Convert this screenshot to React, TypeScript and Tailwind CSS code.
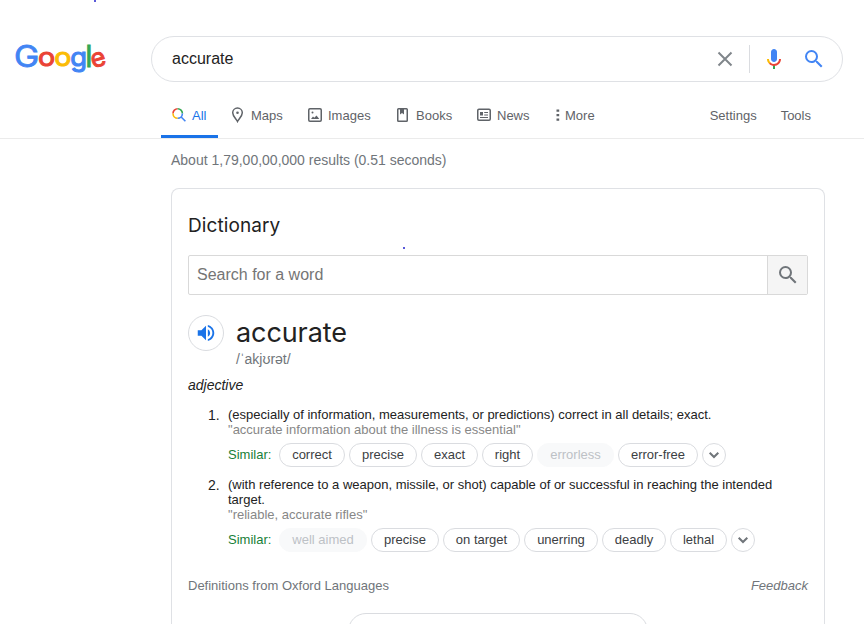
import clsx from "clsx";
import { MdSearch, MdVolumeUp } from "react-icons/md";

type Pill = {
  label: string;
  width: string;
  muted?: boolean;
};

type Definition = {
  lines: string[];
  example: string;
  similar: Pill[];
};

const definitions: Definition[] = [
  {
    lines: [
      "(especially of information, measurements, or predictions) correct in all details; exact.",
    ],
    example: "accurate information about the illness is essential",
    similar: [
      { label: "correct", width: "w-[66px]" },
      { label: "precise", width: "w-[68px]" },
      { label: "exact", width: "w-[57px]" },
      { label: "right", width: "w-[51px]" },
      { label: "errorless", width: "w-[77px]", muted: true },
      { label: "error-free", width: "w-[80px]" },
    ],
  },
  {
    lines: [
      "(with reference to a weapon, missile, or shot) capable of or successful in reaching the intended",
      "target.",
    ],
    example: "reliable, accurate rifles",
    similar: [
      { label: "well aimed", width: "w-[88px]", muted: true },
      { label: "precise", width: "w-[68px]" },
      { label: "on target", width: "w-[77px]" },
      { label: "unerring", width: "w-[74px]" },
      { label: "deadly", width: "w-[64px]" },
      { label: "lethal", width: "w-[57px]" },
    ],
  },
];

function Logo() {
  return (
    <svg
      width="106"
      height="46"
      viewBox="-6 -6 106 46"
      role="img"
      aria-label="Google"
      className="-ml-1.5 -mt-1.5 block font-[Inter,sans-serif]"
    >
      <text x="-1" y="25.500" fontSize="30" textLength="25.200" lengthAdjust="spacingAndGlyphs" fill="#4285f4" stroke="#4285f4" strokeWidth="0.8">G</text>
      <text x="23" y="25.300" fontSize="25.500" textLength="17.200" lengthAdjust="spacingAndGlyphs" fill="#ea4335" stroke="#ea4335" strokeWidth="1">o</text>
      <text x="39.200" y="25.300" fontSize="25.500" textLength="17.200" lengthAdjust="spacingAndGlyphs" fill="#fbbc05" stroke="#fbbc05" strokeWidth="1">o</text>
      <text x="55.200" y="25.300" fontSize="25.500" textLength="16.800" lengthAdjust="spacingAndGlyphs" fill="#4285f4" stroke="#4285f4" strokeWidth="1">g</text>
      <text x="70.300" y="25.600" fontSize="30" fill="#34a853" stroke="#34a853" strokeWidth="0.8">l</text>
      <text x="75.700" y="25.300" fontSize="25.500" fill="#ea4335" stroke="#ea4335" strokeWidth="1" transform="rotate(-16 84 18.500)">e</text>
    </svg>
  );
}

function MicIcon() {
  return (
    <svg viewBox="0 0 24 24" className="h-6 w-6">
      <path fill="#4285f4" d="m12 15c1.66 0 3-1.31 3-2.97v-7.02c0-1.66-1.34-3.01-3-3.01s-3 1.34-3 3.01v7.02c0 1.66 1.34 2.97 3 2.97z" />
      <path fill="#34a853" d="m11 18.08h2v3.92h-2z" />
      <path fill="#fbbc05" d="m7.05 16.87c-1.27-1.33-2.05-2.83-2.05-4.87h2c0 1.45 0.56 2.42 1.47 3.38v0.32l-1.15 1.18z" />
      <path fill="#ea4335" d="m12 16.93a4.97 5.25 0 0 1 -3.54 -1.55l-1.41 1.49c1.26 1.34 3.02 2.13 4.95 2.13 3.87 0 6.99-2.92 6.99-7h-1.99c0 2.92-2.24 4.93-5 4.93z" />
    </svg>
  );
}

function AllIcon() {
  return (
    <svg viewBox="0 0 16 16" className="h-4 w-4" fill="none" strokeWidth="1.6">
      <path stroke="#ea4335" d="M2 6.500a4.700 4.700 0 0 1 4.700-4.700" />
      <path stroke="#34a853" d="M6.700 1.800a4.700 4.700 0 0 1 4.700 4.700" />
      <path stroke="#fbbc05" d="M6.700 11.200a4.700 4.700 0 0 1-4.700-4.700" />
      <path stroke="#4285f4" d="M11.400 6.500a4.700 4.700 0 0 1-4.700 4.700M9.900 9.700l4.500 4.500" />
    </svg>
  );
}

function MapsIcon() {
  return (
    <svg viewBox="0 0 16 16" className="h-4 w-4" fill="none" stroke="#5f6368" strokeWidth="1.5">
      <path d="M7.500 14.500C6.200 11.900 2.700 9.300 2.700 5.800a4.800 4.800 0 0 1 9.600 0C12.300 9.300 8.800 11.900 7.500 14.500z" />
      <circle cx="7.500" cy="5.700" r="1.300" fill="#5f6368" stroke="none" />
    </svg>
  );
}

function ImagesIcon() {
  return (
    <svg viewBox="0 0 16 16" className="h-4 w-4" fill="none" stroke="#5f6368" strokeWidth="1.500">
      <rect x="1.750" y="1.750" width="12.500" height="12.500" rx="1.200" />
      <path d="M4 12l2-2.500 1.300 1.300L9.500 8.500 12.300 12z" fill="#5f6368" stroke="none" />
      <circle cx="5.500" cy="5.500" r="1" fill="#5f6368" stroke="none" />
    </svg>
  );
}

function BooksIcon() {
  return (
    <svg viewBox="0 0 16 16" className="h-4 w-4" fill="none" stroke="#5f6368" strokeWidth="1.500">
      <rect x="2.750" y="1.750" width="9.500" height="12.500" rx="0.800" />
      <path d="M5 2h4v5.500l-2-1.600-2 1.600z" fill="#5f6368" stroke="none" />
    </svg>
  );
}

function NewsIcon() {
  return (
    <svg viewBox="0 0 16 16" className="h-4 w-4" fill="none" stroke="#5f6368" strokeWidth="1.500">
      <rect x="1.750" y="2.250" width="12.500" height="11" rx="1.200" />
      <path d="M4 5h3v3.500H4z" fill="#5f6368" stroke="none" />
      <path d="M8.200 5.500H12M8.200 8H12M4 10.500h8" strokeWidth="1.200" />
    </svg>
  );
}

function MoreIcon() {
  return (
    <svg viewBox="0 0 4 16" className="h-4 w-1" fill="#5f6368">
      <path d="M.5 2.400h2.700v2.400h-2.700zM.5 6.900h2.700v2.400h-2.700zM.5 11.400h2.700v2.400h-2.700z" />
    </svg>
  );
}

function Chevron() {
  return (
    <span className="flex h-6 w-6 items-center justify-center rounded-full border border-[#dadce0]">
      <svg viewBox="0 0 12 12" className="h-3 w-3" fill="none" stroke="#70757a" strokeWidth="2">
        <path d="M1.700 3.700L6 8l4.300-4.300" />
      </svg>
    </span>
  );
}

function Header() {
  return (
    <header className="border-b border-[#ebebeb]">
      <div className="flex h-[82px] items-start pl-[15px] pt-9">
        <div className="w-[136px] pt-[5px]">
          <Logo />
        </div>
        <div className="flex h-[46px] w-[692px] items-center rounded-full border border-[#dfe1e5] pl-5">
          <span className="flex-1 text-base leading-6 text-[#222]">accurate</span>
          <svg viewBox="0 0 16 16" className="mr-4 h-4 w-4" stroke="#80868b" strokeWidth="2">
            <path d="M1.500 1.500l13 13M14.500 1.500l-13 13" />
          </svg>
          <span className="mr-3 h-7 w-px bg-[#dadce0]" />
          <MicIcon />
          <MdSearch className="ml-4 mr-4 h-6 w-6 text-[#4285f4]" />
        </div>
      </div>
      <nav className="flex h-14 items-stretch pl-[161px] text-[13px] leading-[68px] text-[#5f6368]">
        <div className="flex w-[57px] border-b-[3px] border-[#1a73e8] pl-[10px] text-[#1a73e8]">
          <span className="mr-[5px] mt-[25px]"><AllIcon /></span>All
        </div>
        <div className="flex w-[77px] pl-3">
          <span className="mr-[5px] mt-[25px]"><MapsIcon /></span>Maps
        </div>
        <div className="flex w-[89px] pl-3">
          <span className="mr-[5px] mt-[25px]"><ImagesIcon /></span>Images
        </div>
        <div className="flex w-[80px] pl-[11px]">
          <span className="mr-[5px] mt-[25px]"><BooksIcon /></span>Books
        </div>
        <div className="flex w-[78px] pl-3">
          <span className="mr-[5px] mt-[25px]"><NewsIcon /></span>News
        </div>
        <div className="flex pl-[14px]">
          <span className="mr-[5px] mt-[25px]"><MoreIcon /></span>More
        </div>
        <span className="ml-auto mr-6">Settings</span>
        <span className="mr-[53px]">Tools</span>
      </nav>
    </header>
  );
}

export default function App() {
  return (
    <div className="relative h-[624px] w-[864px] overflow-hidden bg-white font-['Liberation_Sans',Arial,sans-serif] text-[#222]">
      <Header />
      <main className="ml-[171px] w-[654px]">
        <p className="h-[49px] pt-3 text-sm leading-[18px] text-[#70757a]">
          About 1,79,00,00,000 results (0.51 seconds)
        </p>

        <section className="h-[450px] rounded-t-lg border border-b-0 border-[#dfe1e5] px-4 pt-[23px]">
          <h2 className="font-[Inter,sans-serif] text-[19px] leading-7 tracking-[0.1px]">Dictionary</h2>

          <div className="mt-[15px] flex h-10 rounded-[2px] border border-[#d9d9d9]">
            <span className="flex-1 pl-2 text-base leading-[37px] text-[#757575]">Search for a word</span>
            <span className="flex w-10 items-center justify-center border-l border-[#d9d9d9] bg-[#f5f5f5]">
              <MdSearch className="h-6 w-6 text-[#70757a]" />
            </span>
          </div>

          <div className="mt-5 flex gap-3">
            <span className="flex h-9 w-9 items-center justify-center rounded-full border border-[#dadce0]">
              <MdVolumeUp className="h-[22px] w-[22px] text-[#1a73e8]" />
            </span>
            <div>
              <h1 className="font-[Inter,sans-serif] text-[27px] leading-9 tracking-[-0.1px]">accurate</h1>
              <p className="-mt-px text-sm leading-[18px] text-[#70757a]">/ˈakjʊrət/</p>
            </div>
          </div>

          <p className="mt-2 text-sm italic leading-[18px]">adjective</p>

          <ol className="mt-[13px] flex flex-col gap-[10px] text-[13px] leading-[15px]">
            {definitions.map((definition, index) => (
              <li key={definition.example} className="flex">
                <span className="w-10 pl-5 text-sm leading-[17px]">{index + 1}.</span>
                <div>
                  {definition.lines.map((line) => (
                    <p key={line} className="whitespace-nowrap">{line}</p>
                  ))}
                  <p className="text-[#878787]">"{definition.example}"</p>
                  <div className="mt-1.5 flex gap-1 leading-6">
                    <span className="w-[47px] text-[#188038]">Similar:</span>
                    {definition.similar.map((pill) => (
                      <span
                        key={pill.label}
                        className={clsx(
                          "h-6 whitespace-nowrap rounded-full border text-center leading-[21px]",
                          pill.width,
                          pill.muted
                            ? "border-[#f8f9fa] bg-[#f8f9fa] text-[#bdc1c6]"
                            : "border-[#dadce0] text-[#3c4043]",
                        )}
                      >
                        {pill.label}
                      </span>
                    ))}
                    <Chevron />
                  </div>
                </div>
              </li>
            ))}
          </ol>

          <div className="mt-[26px] flex h-4 justify-between text-[13px] leading-4 text-[#70757a]">
            <span>Definitions from Oxford Languages</span>
            <span className="italic">Feedback</span>
          </div>

          <div className="mx-auto mt-[19px] h-9 w-[300px] rounded-full border border-[#dadce0]" />
        </section>
      </main>

      {/* stray ink specks lying over the page */}
      <span className="absolute left-[94px] top-0 h-0.5 w-0.5 rounded-full bg-[#2222cc]" />
      <span className="absolute left-[403px] top-[247px] h-0.5 w-0.5 rounded-full bg-[#2222cc]" />
    </div>
  );
}
